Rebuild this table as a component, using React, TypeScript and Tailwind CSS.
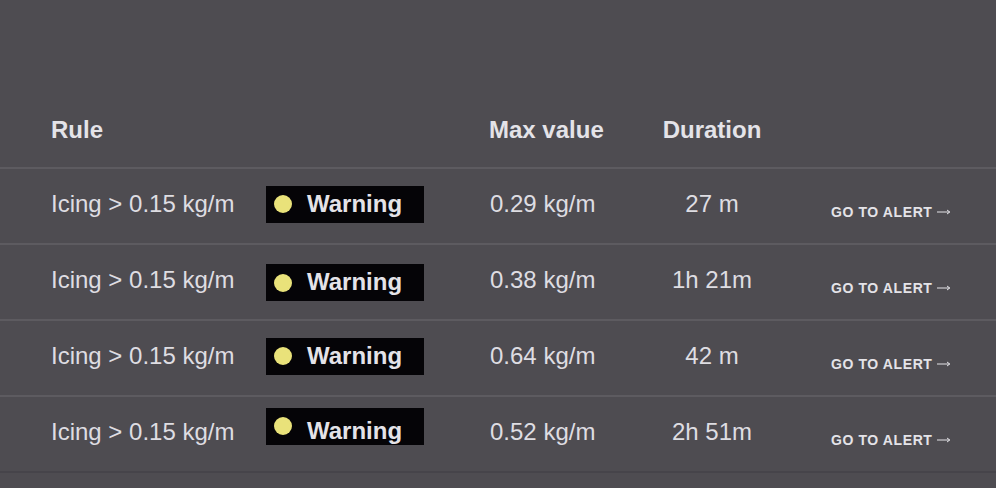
// alert rows, badge offsets follow the screenshot
const alerts = [
  { id: 1, rule: "Icing > 0.15 kg/m", level: "Warning", max: "0.29 kg/m", duration: "27 m", badge: "", label: "" },
  { id: 2, rule: "Icing > 0.15 kg/m", level: "Warning", max: "0.38 kg/m", duration: "1h 21m", badge: "mt-[5px]", label: "-translate-y-[1px]" },
  { id: 3, rule: "Icing > 0.15 kg/m", level: "Warning", max: "0.64 kg/m", duration: "42 m", badge: "", label: "" },
  { id: 4, rule: "Icing > 0.15 kg/m", level: "Warning", max: "0.52 kg/m", duration: "2h 51m", badge: "mb-[12px]", label: "translate-y-[5px]" },
]

const cols = "grid grid-cols-[215px_223px_150px_146px_1fr] pl-[51px]"

function LevelBadge({ level, className, labelClass }: { level: string; className: string; labelClass: string }) {
  return (
    <div className={`flex h-[37px] w-[158px] items-center bg-[#050407] pl-[8px] ${className}`}>
      <span className="h-[18px] w-[18px] shrink-0 rounded-full bg-[#e9e27a]" />
      <span className={`ml-[15px] text-[24px] font-bold leading-[28px] text-[#e4e3e8] ${labelClass}`}>{level}</span>
    </div>
  )
}

export default function App() {
  return (
    <div className="min-h-[488px] w-full bg-[#4e4c51] text-[#dedde2]" style={{ fontFamily: '"Liberation Sans", Arial, sans-serif' }}>
      <div className={`${cols} border-b-2 border-[#5d5b60] pt-[116px] pb-[23px] text-[24px] font-bold leading-[28px] text-[#e4e3e8]`}>
        <div>Rule</div>
        <div />
        <div>Max value</div>
        <div className="text-center">Duration</div>
        <div />
      </div>

      {alerts.map((a, i) => (
        <div
          key={a.id}
          className={`${cols} h-[76px] items-center border-b-2 pb-[4px] text-[24px] leading-[28px] ${
            i === alerts.length - 1 ? "border-[#46444a]" : "border-[#5d5b60]"
          }`}
        >
          <div>{a.rule}</div>
          <div>
            <LevelBadge level={a.level} className={a.badge} labelClass={a.label} />
          </div>
          <div className="pl-[1px]">{a.max}</div>
          <div className="text-center">{a.duration}</div>
          <div className="mt-[9px] pl-[46px]">
            <a href="#" className="inline-flex items-center text-[14px] font-bold leading-[20px] tracking-[0.6px] text-[#e4e3e8]">
              GO TO ALERT
              <svg className="ml-[4px]" width="14" height="8" viewBox="0 0 14 8" fill="none" stroke="currentColor" strokeWidth="1">
                <path d="M0 4h12.5M10 2L12.8 4L10 6" />
              </svg>
            </a>
          </div>
        </div>
      ))}
    </div>
  )
}
